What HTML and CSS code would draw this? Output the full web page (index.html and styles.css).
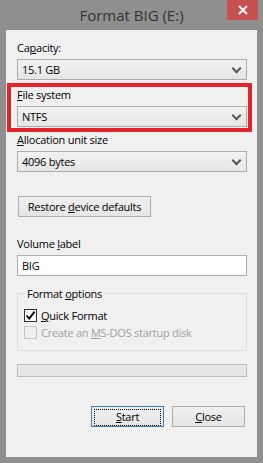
FILE: index.html
```html
<!DOCTYPE html>
<html lang="en">
<head>
    <meta charset="UTF-8">
    <meta name="viewport" content="width=device-width, initial-scale=1.0">
    <title>Format BIG (E:)</title>
    <link rel="stylesheet" href="styles.css">
</head>
<body>
    <div class="window">
        <div class="titlebar">
            <span></span>
            <span class="title">Format BIG (E:)</span>
            <span class="close-btn">
                <svg width="10" height="10" viewBox="0 0 10 10">
                    <path d="M1 1 L9 9 M9 1 L1 9" stroke="#fff" stroke-width="1.8" fill="none"/>
                </svg>
            </span>
        </div>

        <div class="client">
            <div class="field field-capacity">
                <label>Ca<u>p</u>acity:</label>
                <div class="combo">15.1 GB<span class="arrow"></span></div>
            </div>

            <div class="field field-fs highlight">
                <label><u>F</u>ile system</label>
                <div class="combo">NTFS<span class="arrow"></span></div>
            </div>

            <div class="field field-alloc">
                <label><u>A</u>llocation unit size</label>
                <div class="combo">4096 bytes<span class="arrow"></span></div>
            </div>

            <div class="btn btn-restore">Restore <u>d</u>evice defaults</div>

            <div class="field field-volume">
                <label>Volume <u>l</u>abel</label>
                <div class="textbox">BIG</div>
            </div>

            <fieldset class="options">
                <legend>Format <u>o</u>ptions</legend>
                <div class="check-row">
                    <span class="checkbox">
                        <svg width="11" height="11" viewBox="0 0 11 11">
                            <path d="M1.5 5.5 L4.2 8.6 L9.6 1.6" stroke="#000" stroke-width="1.9" fill="none"/>
                        </svg>
                    </span>
                    <span><u>Q</u>uick Format</span>
                </div>
                <div class="check-row disabled">
                    <span class="checkbox"></span>
                    <span>Create an <u>M</u>S-DOS startup disk</span>
                </div>
            </fieldset>

            <div class="progress"></div>

            <div class="actions">
                <div class="btn btn-start"><span class="focus"><u>S</u>tart</span></div>
                <div class="btn btn-close"><u>C</u>lose</div>
            </div>
        </div>
    </div>
</body>
</html>
```

FILE: styles.css
```css
body {
    margin: 0;
    background: #8f8f8f;
    font-family: "Open Sans", "Liberation Sans", Arial, sans-serif;
    font-size: 11px;
    letter-spacing: -0.25px;
    color: #000;
}

.window {
    width: 263px;
    height: 463px;
    padding: 0 6px 6px;
    box-sizing: border-box;
    display: flex;
    flex-direction: column;
}

.titlebar {
    height: 30px;
    display: grid;
    grid-template-columns: 1fr auto 1fr;
    align-items: start;
}

.title {
    font-size: 15px;
    color: #333;
    line-height: 30px;
    letter-spacing: 0;
}

.close-btn {
    justify-self: end;
    width: 31px;
    height: 20px;
    margin-right: -1px;
    background: #c75050;
    display: flex;
    align-items: center;
    justify-content: center;
}

.client {
    flex: 1;
    background: #f0f0f0;
    padding: 10px 10px 0 11px;
    display: flex;
    flex-direction: column;
}

.field label {
    display: block;
    line-height: 15px;
    margin-bottom: 4px;
    white-space: nowrap;
}

.field-fs { margin-top: 7px; }
.field-alloc { margin-top: 5px; }
.field-volume { margin-top: 19px; }

.highlight {
    position: relative;
}

.highlight::after {
    content: "";
    position: absolute;
    top: -4px;
    left: -10px;
    right: -5px;
    bottom: -5px;
    border: 4px solid #e3242b;
    pointer-events: none;
}

.combo {
    position: relative;
    height: 21px;
    box-sizing: border-box;
    border: 1px solid #acacac;
    background: linear-gradient(#f2f2f2, #e6e6e6);
    padding-left: 4px;
    line-height: 19px;
}

.combo .arrow {
    position: absolute;
    right: 6px;
    top: 5px;
    width: 5px;
    height: 5px;
    border-right: 2px solid #555;
    border-bottom: 2px solid #555;
    transform: rotate(45deg);
}

.textbox {
    height: 21px;
    box-sizing: border-box;
    border: 1px solid #abadb3;
    background: #fff;
    padding-left: 4px;
    line-height: 19px;
}

.btn {
    height: 21px;
    box-sizing: border-box;
    border: 1px solid #acacac;
    background: linear-gradient(#f0f0f0, #e5e5e5);
    line-height: 19px;
    text-align: center;
    white-space: nowrap;
}

.btn-restore {
    width: 133px;
    margin: 24px 0 0 1px;
}

.options {
    margin: 10px 0 0;
    padding: 6px 6px 9px 6px;
    border: 1px solid #dcdcdc;
    min-width: 0;
}

.options legend {
    padding: 0 2px;
    margin-left: 1px;
    line-height: 15px;
}

.check-row {
    display: flex;
    align-items: center;
    gap: 4px;
    height: 17px;
    white-space: nowrap;
}

.checkbox {
    width: 13px;
    height: 13px;
    box-sizing: border-box;
    border: 1px solid #333;
    background: #fff;
    display: flex;
    align-items: center;
    justify-content: center;
}

.check-row.disabled {
    color: #a0a0a0;
}

.check-row.disabled .checkbox {
    border-color: #c8c8c8;
    background: #f0f0f0;
}

.progress {
    height: 13px;
    margin-top: 13px;
    box-sizing: border-box;
    border: 1px solid #bcbcbc;
    background: #e6e6e6;
}

.actions {
    margin-top: 29px;
    display: flex;
    justify-content: flex-end;
    gap: 8px;
    padding-right: 2px;
}

.btn-start,
.btn-close {
    width: 73px;
}

.btn-start {
    border-color: #3c7fb1;
    padding: 2px;
}

.btn-start .focus {
    display: block;
    height: 15px;
    line-height: 14px;
    border: 1px dotted #000;
}
```
